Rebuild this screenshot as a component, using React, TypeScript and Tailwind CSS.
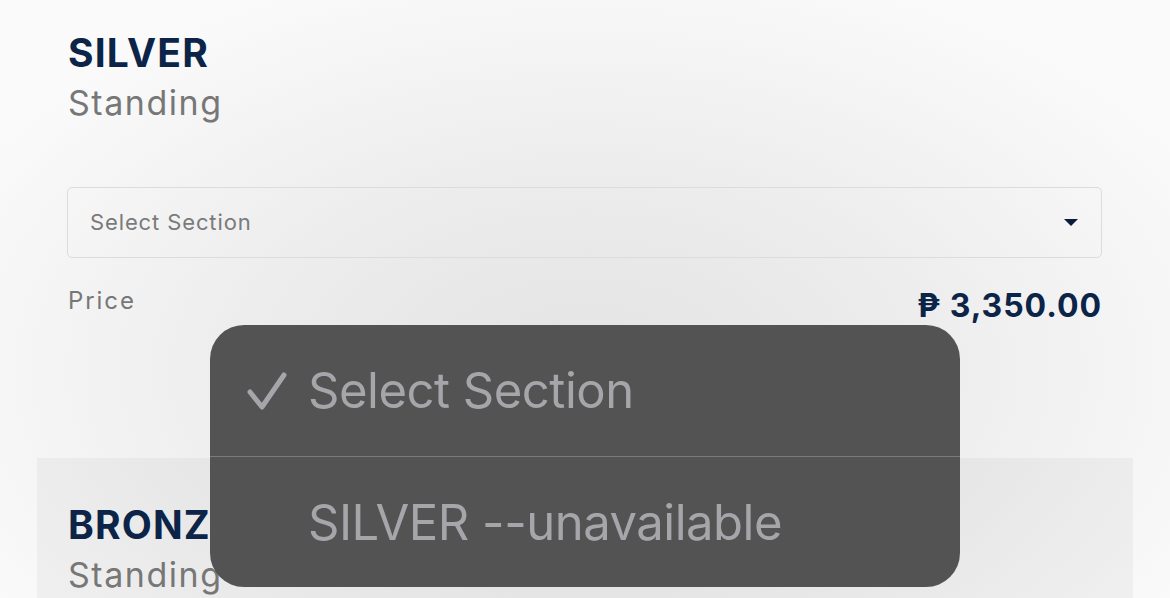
const navy = "text-[#0b2447]";

function TierHeader({ name }: { name: string }) {
  return (
    <div>
      <h2 className={`text-[39px] font-bold leading-[48px] tracking-[0.03em] ${navy}`}>{name}</h2>
      <p className="mt-[4px] text-[34px] leading-[44px] tracking-[0.045em] text-[#777]">Standing</p>
    </div>
  );
}

function NativePicker() {
  return (
    <div className="absolute left-[210px] top-[325px] w-[750px] overflow-hidden rounded-[34px] bg-[#535353] text-[#a5a5aa]">
      <div className="flex h-[131px] items-center pl-[37px]">
        <svg className="h-[40px] w-[40px]" viewBox="0 0 40 40" fill="none">
          <path d="M3 21 L15 36 L37 4" stroke="#a5a5aa" strokeWidth="5" strokeLinecap="round" strokeLinejoin="round" />
        </svg>
        <span className="ml-[21px] text-[49px] leading-none tracking-[-0.01em]">Select Section</span>
      </div>
      <div className="h-px bg-[#7a7a7a]" />
      <div className="flex h-[130px] items-center pl-[98px]">
        <span className="text-[49px] leading-none tracking-[-0.01em]">SILVER --unavailable</span>
      </div>
    </div>
  );
}

export default function App() {
  return (
    <div className="relative h-[598px] w-[1170px] overflow-hidden bg-[radial-gradient(ellipse_60%_70%_at_50%_62%,#e3e3e3_0%,#ececec_45%,#fafafa_100%)] font-['Inter',sans-serif]">
      <section className="px-[68px] pt-[29px]">
        <TierHeader name="SILVER" />
        <div className="-ml-px mt-[62px] flex h-[71px] items-center justify-between rounded-[5px] border border-[#dcdcdc] pl-[22px] pr-[23px]">
          <span className="text-[22px] tracking-[0.04em] text-[#7a7a7a]">Select Section</span>
          <svg width="14" height="8" viewBox="0 0 14 8" className="mt-px">
            <path d="M0 0 H14 L7 7 Z" fill="#0b1a3d" />
          </svg>
        </div>
        <div className="mt-[25px] flex items-start justify-between">
          <span className="text-[24px] tracking-[0.08em] text-[#777]">Price</span>
          <span className={`-mt-[1px] text-[32px] font-bold tracking-[0.03em] ${navy}`}>₱ 3,350.00</span>
        </div>
      </section>

      <section className="mx-[37px] mt-[128px] h-[200px] bg-black/[0.035] px-[31px] pt-[43px]">
        <TierHeader name="BRONZE" />
      </section>

      <NativePicker />
    </div>
  );
}
